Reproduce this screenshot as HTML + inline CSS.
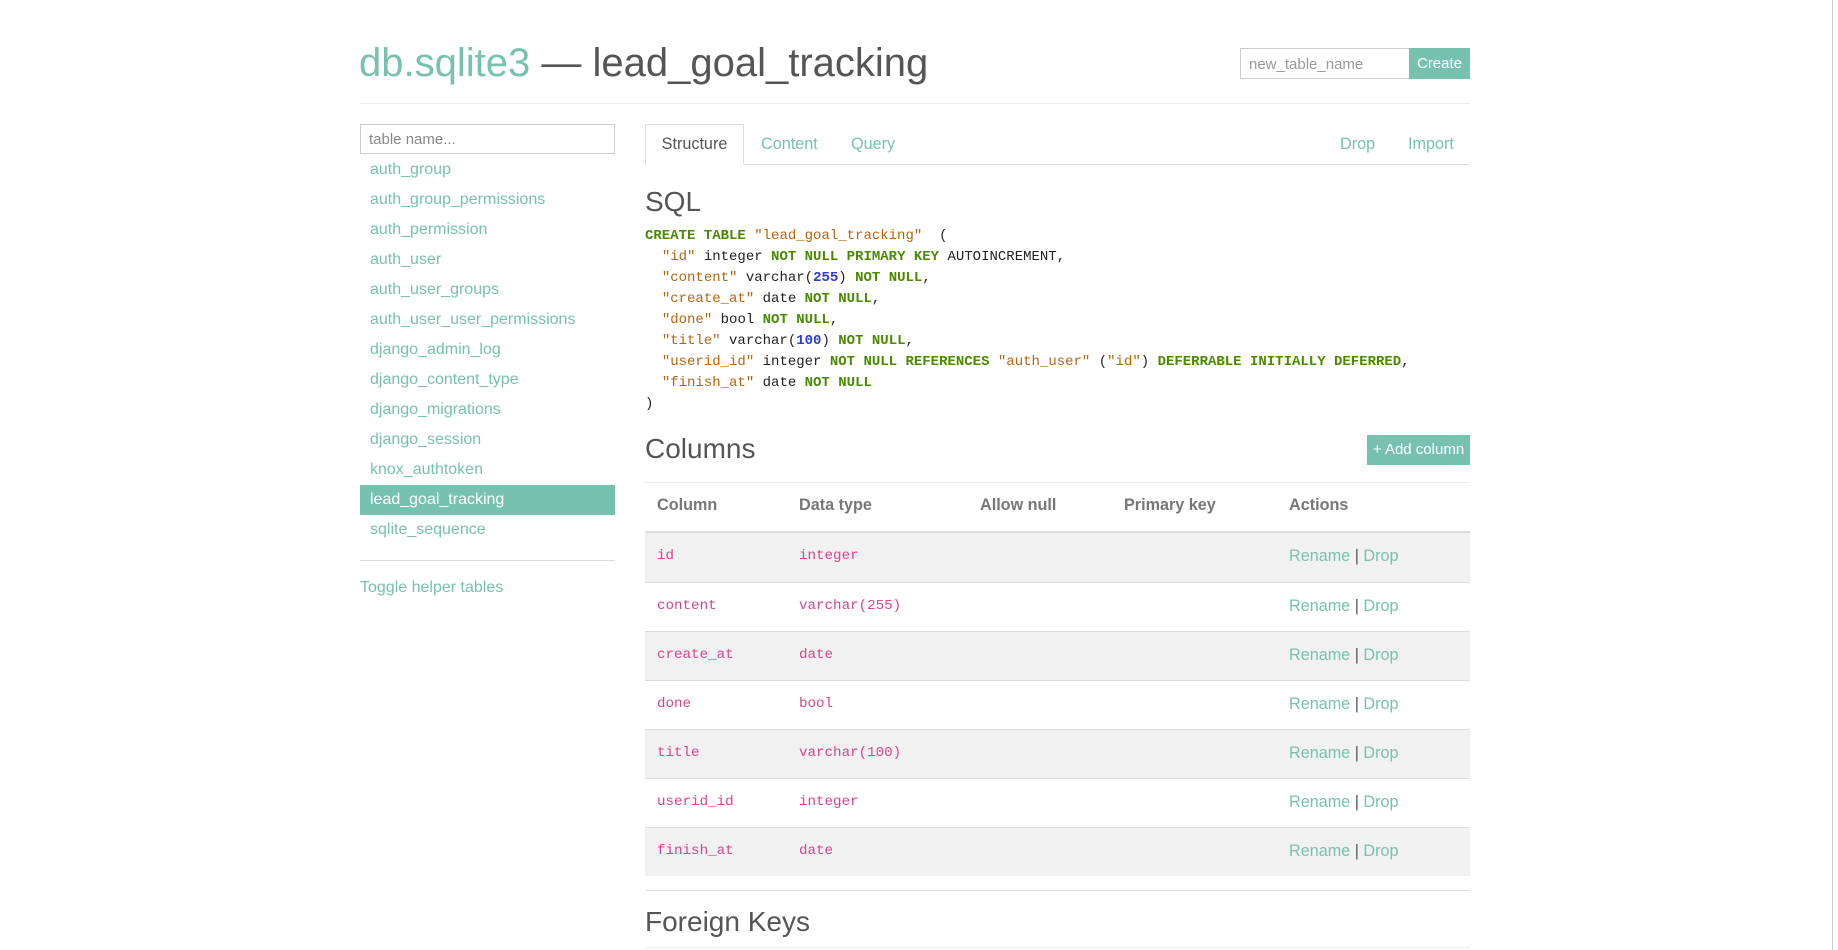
<!DOCTYPE html>
<html><head><meta charset="utf-8">
<style>
*{box-sizing:border-box;margin:0;padding:0}
body{width:1838px;height:950px;overflow:hidden;background:#fff;font-family:"Liberation Sans",sans-serif;color:#555;position:relative}
.a{position:absolute;white-space:nowrap}
.g{color:#76c2af}
.mono{font-family:"Liberation Mono",monospace}
.k{color:#4a8a00;font-weight:bold}
.s{color:#b5650e}
.n{color:#2a3adf;font-weight:bold}
.side div{position:absolute;left:370px;font-size:16px;color:#76c2af;line-height:30px}
.row{position:absolute;left:645px;width:825px;height:49px}
.row span{position:absolute;top:15px;font-family:"Liberation Mono",monospace;font-size:14.2px;color:#d6458c}
.row b{position:absolute;left:644px;top:14px;font-weight:normal;font-size:16.2px;color:#76c2af}
.row b i{font-style:normal;color:#555;font-size:16.2px}
.th{position:absolute;top:496px;font-weight:bold;font-size:16.2px;color:#777}
</style></head><body>
<div class="a" style="left:359px;top:38px;font-size:40px;line-height:50px"><span class="g">db.sqlite3</span> — lead_goal_tracking</div>
<div class="a" style="left:1240px;top:48px;width:170px;height:31px;border:1px solid #ccc;font-size:15px;color:#999;padding:7px 8px">new_table_name</div>
<div class="a" style="left:1409px;top:48px;width:61px;height:31px;background:#76c2af;color:#fff;font-size:15px;text-align:center;line-height:31px">Create</div>
<div class="a" style="left:360px;top:103px;width:1110px;height:1px;background:#eee"></div>

<div class="a" style="left:360px;top:124px;width:255px;height:30px;border:1px solid #ccc;font-size:15px;color:#888;padding:6px 8px">table name...</div>
<div class="side">
<div style="top:155px">auth_group</div>
<div style="top:185px">auth_group_permissions</div>
<div style="top:215px">auth_permission</div>
<div style="top:245px">auth_user</div>
<div style="top:275px">auth_user_groups</div>
<div style="top:305px">auth_user_user_permissions</div>
<div style="top:335px">django_admin_log</div>
<div style="top:365px">django_content_type</div>
<div style="top:395px">django_migrations</div>
<div style="top:425px">django_session</div>
<div style="top:455px">knox_authtoken</div>
<div style="top:485px;left:360px;width:255px;height:30px;background:#76c2af;color:#fff;padding-left:10px">lead_goal_tracking</div>
<div style="top:515px">sqlite_sequence</div>
</div>
<div class="a" style="left:360px;top:560px;width:255px;height:1px;background:#ddd"></div>
<div class="a g" style="left:360px;top:579px;font-size:16px">Toggle helper tables</div>

<div class="a" style="left:645px;top:164px;width:825px;height:1px;background:#ddd"></div>
<div class="a" style="left:645px;top:124px;width:99px;height:41px;border:1px solid #ddd;border-bottom-color:#fff;background:#fff;font-size:16.2px;text-align:center;line-height:39px">Structure</div>
<div class="a g" style="left:761px;top:135px;font-size:16.2px">Content</div>
<div class="a g" style="left:851px;top:135px;font-size:16.2px">Query</div>
<div class="a g" style="left:1340px;top:135px;font-size:16.2px">Drop</div>
<div class="a g" style="left:1408px;top:135px;font-size:16.2px">Import</div>

<div class="a" style="left:645px;top:186px;font-size:28px">SQL</div>
<pre class="a mono" style="white-space:pre;left:645px;top:226px;font-size:14px;line-height:21px;color:#222"><span class="k">CREATE TABLE</span> <span class="s">"lead_goal_tracking"</span>  (
  <span class="s">"id"</span> integer <span class="k">NOT NULL PRIMARY KEY</span> AUTOINCREMENT,
  <span class="s">"content"</span> varchar(<span class="n">255</span>) <span class="k">NOT NULL</span>,
  <span class="s">"create_at"</span> date <span class="k">NOT NULL</span>,
  <span class="s">"done"</span> bool <span class="k">NOT NULL</span>,
  <span class="s">"title"</span> varchar(<span class="n">100</span>) <span class="k">NOT NULL</span>,
  <span class="s">"userid_id"</span> integer <span class="k">NOT NULL REFERENCES</span> <span class="s">"auth_user"</span> (<span class="s">"id"</span>) <span class="k">DEFERRABLE INITIALLY DEFERRED</span>,
  <span class="s">"finish_at"</span> date <span class="k">NOT NULL</span>
)</pre>

<div class="a" style="left:645px;top:433px;font-size:28px">Columns</div>
<div class="a" style="left:1367px;top:435px;width:103px;height:30px;background:#76c2af;color:#fff;font-size:15px;text-align:center;line-height:30px">+ Add column</div>
<div class="a" style="left:645px;top:482px;width:825px;height:1px;background:#eee"></div>
<div class="th" style="left:657px">Column</div>
<div class="th" style="left:799px">Data type</div>
<div class="th" style="left:980px">Allow null</div>
<div class="th" style="left:1124px">Primary key</div>
<div class="th" style="left:1289px">Actions</div>
<div class="a" style="left:645px;top:531px;width:825px;height:2px;background:#ddd"></div>

<div class="row" style="top:533px;background:#f1f1f1"><span style="left:12px">id</span><span style="left:154px">integer</span><b>Rename <i>|</i> Drop</b></div>
<div class="row" style="top:582px;border-top:1px solid #ddd"><span style="left:12px">content</span><span style="left:154px">varchar(255)</span><b>Rename <i>|</i> Drop</b></div>
<div class="row" style="top:631px;background:#f1f1f1;border-top:1px solid #ddd"><span style="left:12px">create_at</span><span style="left:154px">date</span><b>Rename <i>|</i> Drop</b></div>
<div class="row" style="top:680px;border-top:1px solid #ddd"><span style="left:12px">done</span><span style="left:154px">bool</span><b>Rename <i>|</i> Drop</b></div>
<div class="row" style="top:729px;background:#f1f1f1;border-top:1px solid #ddd"><span style="left:12px">title</span><span style="left:154px">varchar(100)</span><b>Rename <i>|</i> Drop</b></div>
<div class="row" style="top:778px;border-top:1px solid #ddd"><span style="left:12px">userid_id</span><span style="left:154px">integer</span><b>Rename <i>|</i> Drop</b></div>
<div class="row" style="top:827px;background:#f1f1f1;border-top:1px solid #ddd"><span style="left:12px">finish_at</span><span style="left:154px">date</span><b>Rename <i>|</i> Drop</b></div>

<div class="a" style="left:645px;top:890px;width:825px;height:1px;background:#ddd"></div>
<div class="a" style="left:645px;top:906px;font-size:28px">Foreign Keys</div>
<div class="a" style="left:645px;top:947px;width:825px;height:1px;background:#eee"></div>

<div class="a" style="left:1832px;top:0;width:1px;height:950px;background:#ccc"></div>
</body></html>
